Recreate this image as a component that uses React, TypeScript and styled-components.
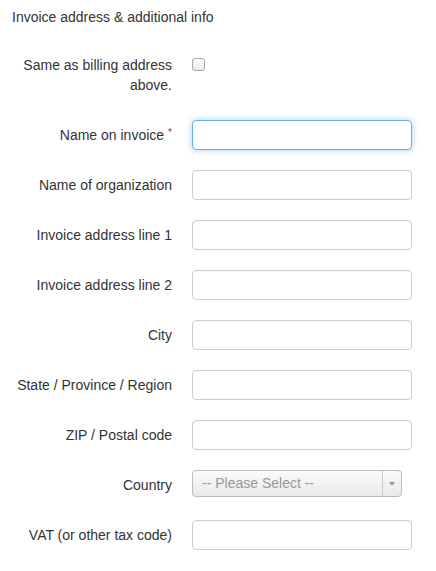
import React from 'react';
import styled, { createGlobalStyle } from 'styled-components';

const GlobalStyle = createGlobalStyle`
  body {
    margin: 0;
    background: #fff;
    font-family: "Helvetica Neue", "Liberation Sans", Arial, sans-serif;
    font-size: 14px;
    color: #333;
  }
`;

const Wrapper = styled.div`
  padding-top: 7px;
`;

const Title = styled.div`
  margin-left: 12px;
  line-height: 20px;
  font-size: 14px;
  color: #333;
`;

const Form = styled.form`
  margin-top: 28px;
  display: flex;
  flex-direction: column;
  gap: 20px;
`;

const Row = styled.div<{ $extra?: number }>`
  display: grid;
  grid-template-columns: 172px 220px;
  grid-auto-rows: minmax(30px, auto);
  column-gap: 20px;
  padding-bottom: ${({ $extra }) => $extra || 0}px;
`;

const Label = styled.label<{ $top?: number }>`
  text-align: right;
  line-height: 20px;
  padding-top: ${({ $top }) => ($top === undefined ? 5 : $top)}px;
`;

const Required = styled.span`
  position: relative;
  top: -4px;
  color: #d9130f;
  font-size: 10px;
  line-height: 0;
  margin-left: 4px;
`;

const Input = styled.input<{ $focus?: boolean }>`
  box-sizing: border-box;
  width: 220px;
  height: 30px;
  border: 1px solid ${({ $focus }) => ($focus ? '#66afe9' : '#ccc')};
  border-radius: 4px;
  box-shadow: ${({ $focus }) =>
    $focus ? '0 0 6px rgba(102,175,233,.6)' : 'inset 0 1px 1px rgba(0,0,0,.03)'};
  outline: none;
  padding: 0 8px;
  font: inherit;
`;

const Check = styled.input`
  appearance: none;
  box-sizing: border-box;
  width: 13px;
  height: 13px;
  margin: 3px 0 0;
  border: 1px solid #a6a6a6;
  border-radius: 3px;
  background: linear-gradient(#fdfdfd, #ececec);
`;

const Select = styled.div`
  box-sizing: border-box;
  width: 210px;
  height: 27px;
  display: flex;
  border: 1px solid #bcbcbc;
  border-radius: 4px;
  background: linear-gradient(#fbfbfb, #e9e9e9);
  color: #999;
`;

const SelectText = styled.span`
  flex: 1;
  padding-left: 9px;
  line-height: 25px;
`;

const Arrow = styled.span`
  width: 18px;
  border-left: 1px solid #c8c8c8;
  display: flex;
  align-items: center;
  justify-content: center;
  &::after {
    content: '';
    border-left: 3px solid transparent;
    border-right: 3px solid transparent;
    border-top: 4px solid #999;
  }
`;

const fields = [
  'Name of organization',
  'Invoice address line 1',
  'Invoice address line 2',
  'City',
  'State / Province / Region',
  'ZIP / Postal code',
];

export default function App() {
  return (
    <Wrapper>
      <GlobalStyle />
      <Title>Invoice address &amp; additional info</Title>
      <Form>
        <Row $extra={5}>
          <Label $top={0}>Same as billing address above.</Label>
          <div>
            <Check type="checkbox" />
          </div>
        </Row>
        <Row>
          <Label>
            Name on invoice<Required>*</Required>
          </Label>
          <Input $focus />
        </Row>
        {fields.map((f) => (
          <Row key={f}>
            <Label>{f}</Label>
            <Input />
          </Row>
        ))}
        <Row>
          <Label>Country</Label>
          <Select>
            <SelectText>-- Please Select --</SelectText>
            <Arrow />
          </Select>
        </Row>
        <Row>
          <Label>VAT (or other tax code)</Label>
          <Input />
        </Row>
      </Form>
    </Wrapper>
  );
}
